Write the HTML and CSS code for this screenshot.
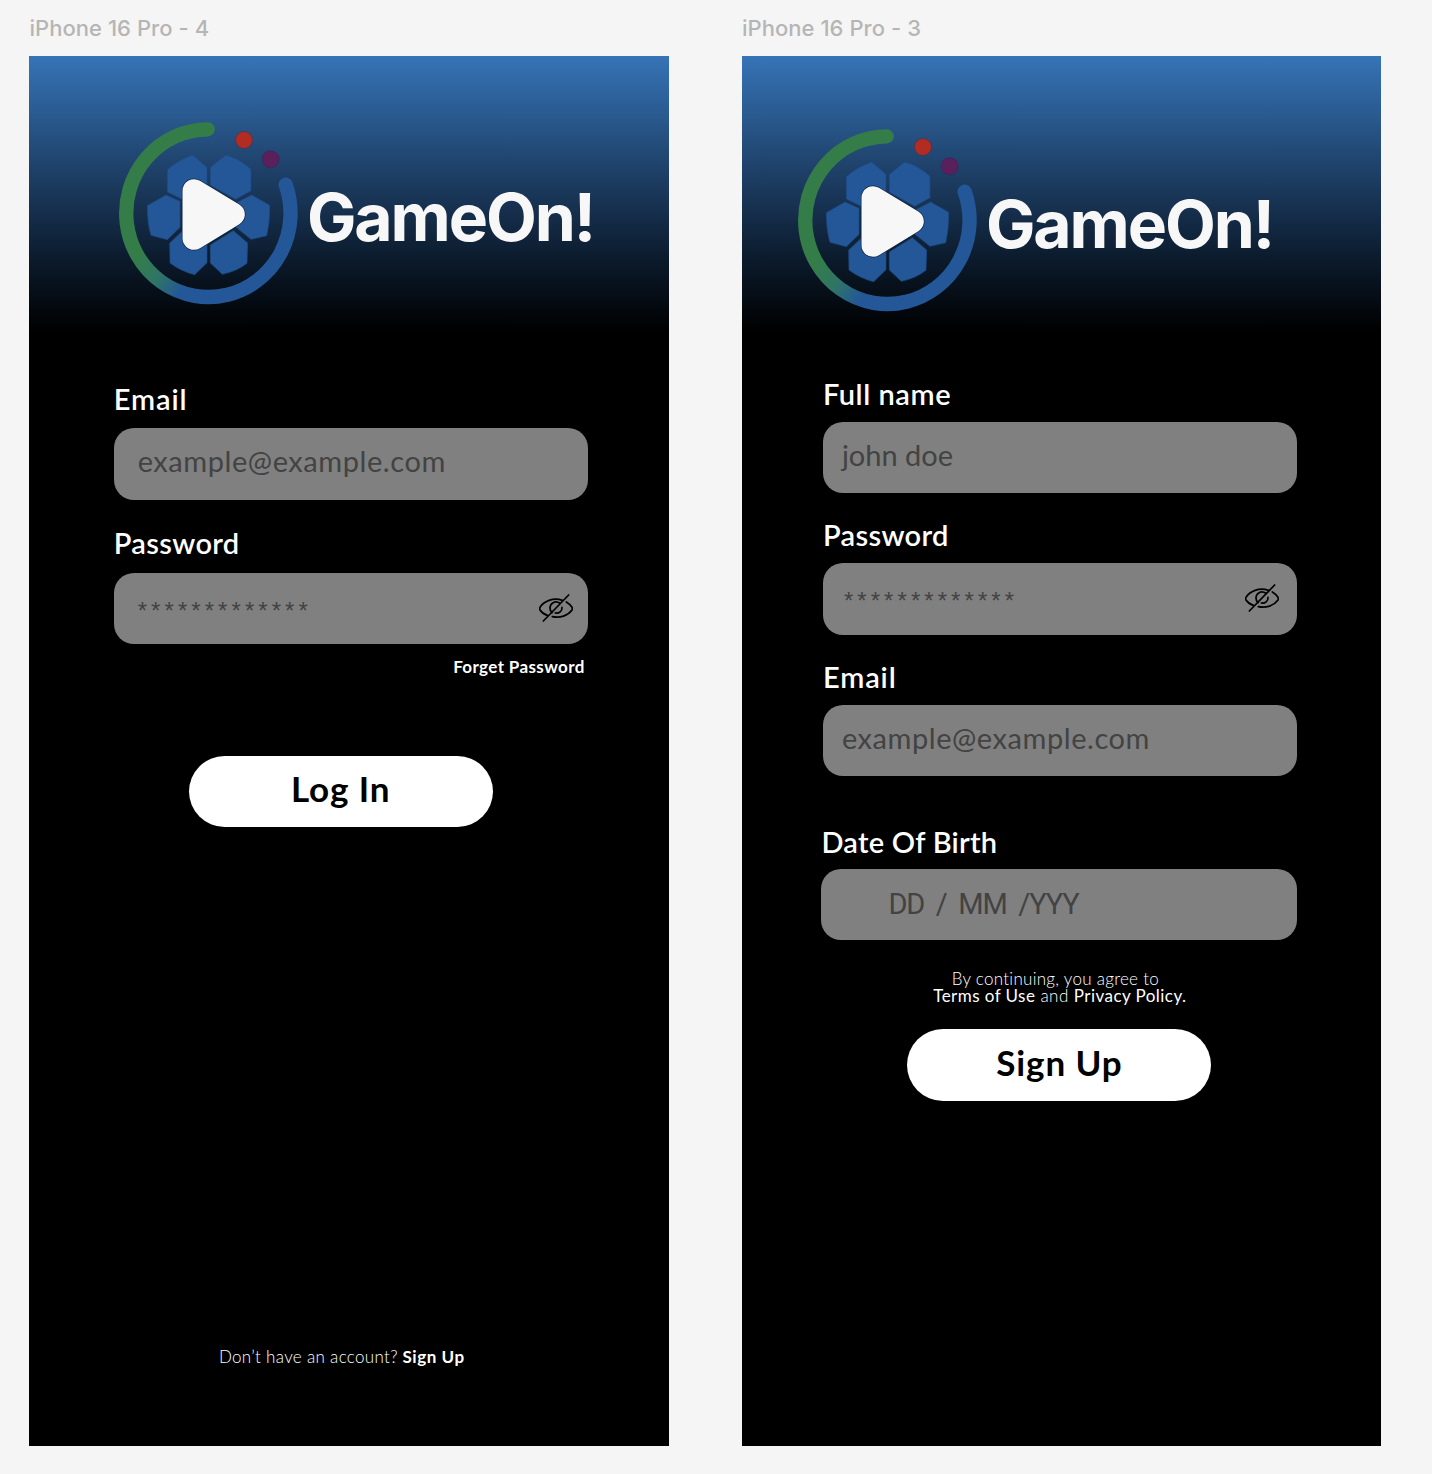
FILE: index.html
```html
<!DOCTYPE html>
<html lang="en">
<head>
<meta charset="utf-8">
<title>GameOn!</title>
<link rel="stylesheet" href="styles.css">
</head>
<body>
<svg class="defs" width="0" height="0" aria-hidden="true">
  <defs>
    <linearGradient id="ring" gradientUnits="userSpaceOnUse" x1="125" y1="420" x2="265" y2="515">
      <stop offset="0" stop-color="#347d49"/>
      <stop offset="0.5" stop-color="#2f7565"/>
      <stop offset="1" stop-color="#235797"/>
    </linearGradient>
    <symbol id="logo" viewBox="0 0 630 630">
      <path d="M323 58A246.500 251.500 0 1 0 557 224" fill="none" stroke="url(#ring)" stroke-width="43" stroke-linecap="round"/>
      <g fill="#235797" stroke="#1c4a86" stroke-width="2" stroke-linejoin="round">
        <path d="M202 179Q236 149 278 135L321 172V243L275 269L247 268L202 246Z"/>
        <path d="M331 172L377 135Q418 145 453 178V242L407 268L331 225Z"/>
        <path d="M142 287L198 255L240 274V352L202 389L153 376Q142 340 142 287Z"/>
        <path d="M410 278L455 255L509 286Q510 335 500 377L453 388L408 352Z"/>
        <path d="M209 399L247 364L321 400V458L284 494Q243 484 210 459Z"/>
        <path d="M331 405L400 362L443 399L441 460Q410 484 367 493L331 459Z"/>
      </g>
      <path d="M282 242V385L400 313Z" fill="none" stroke="#0c2542" stroke-width="73" stroke-linejoin="round"/>
      <path d="M282 242V385L400 313Z" fill="#f7f7f7" stroke="#f7f7f7" stroke-width="69" stroke-linejoin="round"/>
      <circle cx="432" cy="90" r="25.500" fill="#b22c24" stroke="#522f43" stroke-width="2"/>
      <circle cx="512" cy="148" r="25.500" fill="#59205c" stroke="#3a2458" stroke-width="2"/>
    </symbol>
    <symbol id="eye-off" viewBox="27 26 102 84">
      <g fill="none" stroke="#000" stroke-width="5.200" stroke-linecap="round">
        <path d="M97 45C70 34 40 49 30 66Q28 70 30 74C35 82 43 87 52 90"/>
        <path d="M109 50C116 54 122 60 126 66Q128 70 126 74C114 91 90 99 67 94"/>
        <path d="M90 54C75 44 60 54 60 68Q60 77 66 82"/>
        <path d="M96 66C97 77 87 85 76 83"/>
        <path d="M40 107L116 29"/>
      </g>
    </symbol>
  </defs>
</svg>
<main class="canvas">
  <section class="artboard">
    <h2 class="artboard-name">iPhone 16 Pro - 4</h2>
    <div class="phone">
      <header class="brand">
        <svg class="brand-mark"><use href="#logo"/></svg>
        <span class="brand-name">GameOn!</span>
      </header>
      <form class="form login">
        <div class="field">
          <label class="label email">Email</label>
          <div class="input"><span class="hint mail">example@example.com</span></div>
        </div>
        <div class="field">
          <label class="label password">Password</label>
          <div class="input secret"><span class="stars">*************</span><svg class="eye"><use href="#eye-off"/></svg></div>
        </div>
        <a class="forgot">Forget Password</a>
        <div class="button"><span class="log-in">Log In</span></div>
      </form>
      <p class="account"><span class="question">Don’t have an account?</span> <b>Sign Up</b></p>
    </div>
  </section>
  <section class="artboard">
    <h2 class="artboard-name">iPhone 16 Pro - 3</h2>
    <div class="phone">
      <header class="brand brand-signup">
        <svg class="brand-mark"><use href="#logo"/></svg>
        <span class="brand-name">GameOn!</span>
      </header>
      <form class="form signup">
        <div class="field">
          <label class="label name">Full name</label>
          <div class="input"><span class="hint person">john doe</span></div>
        </div>
        <div class="field">
          <label class="label password">Password</label>
          <div class="input secret"><span class="stars">*************</span><svg class="eye"><use href="#eye-off"/></svg></div>
        </div>
        <div class="field">
          <label class="label email">Email</label>
          <div class="input"><span class="hint mail">example@example.com</span></div>
        </div>
        <div class="field birth">
          <label class="label date">Date Of Birth</label>
          <div class="input"><span class="hint day">DD / MM /YYY</span></div>
        </div>
        <p class="terms"><span class="agree">By continuing, you agree to</span><span class="links"><b>Terms of Use</b> and <b>Privacy Policy.</b></span></p>
        <div class="button"><span class="sign-up">Sign Up</span></div>
      </form>
    </div>
  </section>
</main>
</body>
</html>
```
FILE: styles.css
```css
* { box-sizing: border-box; }

body {
  margin: 0;
  background: #f5f5f5;
  font-family: Lato, "Open Sans", sans-serif;
  color: #fff;
}

.defs { display: block; }

.canvas {
  display: flex;
  gap: 73px;
  height: 1474px;
  padding: 14px 0 0 29.4px;
}

.artboard { width: 639.5px; }

.artboard-name {
  margin: 0;
  height: 42px;
  font: 450 22px/28px Inter, sans-serif;
  letter-spacing: 0.05px;
  color: #b5b5b5;
}

.phone {
  display: flex;
  flex-direction: column;
  height: 1390px;
  background: linear-gradient(#3673b7 0, #2b5d94 52px, #1e4068 115px, #0b1a2b 205px, #000 275px) #000;
}

.brand {
  display: flex;
  height: 324px;
  padding: 54px 0 0 70.5px;
}

.brand-signup { height: 319px; padding: 60.5px 0 0 37px; }

.brand-mark { flex: none; width: 210px; height: 210px; }

.brand-name {
  margin: 67px 0 0 -3px;
  font: 700 66px/80px Inter, sans-serif;
  letter-spacing: -2.1px;
  color: #f7f7f7;
  white-space: nowrap;
}

.form { display: flex; flex-direction: column; }

.login { width: 474px; margin-left: 84.3px; }
.signup { width: 474px; margin-left: 81px; }

.field { margin-bottom: 25px; }
.signup .field { margin-bottom: 23.5px; }

.label {
  display: block;
  height: 48px;
  padding-top: 0.5px;
  font-size: 29px;
  font-weight: 600;
  line-height: 36px;
  white-space: nowrap;
}

.email { letter-spacing: 0.9px; }
.password { letter-spacing: 0.35px; }
.name { letter-spacing: 0.55px; }
.date { letter-spacing: 0.25px; }

.signup .label { height: 46.5px; }

.input {
  display: flex;
  align-items: center;
  height: 71.5px;
  padding: 0 14.5px 6px 24px;
  border-radius: 20px;
  background: #808080;
}

.signup .input { padding: 0 18px 5px 19px; }

.hint { font-size: 29px; line-height: 36px; color: #434343; white-space: nowrap; }
.mail { letter-spacing: 0.56px; }

.input.secret, .signup .input.secret { padding-bottom: 1.5px; }
.signup .input.secret { padding-left: 21px; }

.stars {
  padding-top: 6px;
  font: 400 24px/30px "Liberation Sans", sans-serif;
  letter-spacing: 4.06px;
  color: #434343;
}

.eye { width: 34px; height: 28px; margin-left: auto; }

.forgot {
  align-self: flex-end;
  margin: -14px 3px 0 0;
  font-size: 17px;
  font-weight: 700;
  line-height: 24px;
  letter-spacing: 0.37px;
}

.button {
  display: flex;
  align-items: center;
  justify-content: center;
  width: 304px;
  height: 71.5px;
  padding-bottom: 6px;
  border-radius: 36px;
  background: #fff;
  color: #000;
  font-size: 35px;
  font-weight: 700;
  line-height: 40px;
  letter-spacing: 0.9px;
}

.login .button { margin: 76.5px 0 0 75px; }
.signup .button { margin: 24.5px 0 0 84.500px; }

.account {
  margin: auto 0 77px 189.5px;
  font-size: 17px;
  line-height: 24px;
  letter-spacing: 0.32px;
  white-space: nowrap;
}

.account b { letter-spacing: 0.55px; }

.question, .agree, .links { font-weight: 300; }

.signup .birth { width: 475.5px; margin: 24px 0 0 -1.5px; }
.signup .birth .label { height: 45px; }
.signup .birth .input { padding: 0 0 0 67px; }
.hint.day { font-family: Roboto, sans-serif; letter-spacing: -1.1px; word-spacing: 5.5px; }

.terms {
  display: flex;
  flex-direction: column;
  align-items: center;
  margin: 29.5px 0 0;
  font-size: 17px;
  line-height: 17.5px;
  letter-spacing: 0.45px;
  white-space: nowrap;
}

.agree { margin-right: 9px; letter-spacing: 0.28px; }
```
